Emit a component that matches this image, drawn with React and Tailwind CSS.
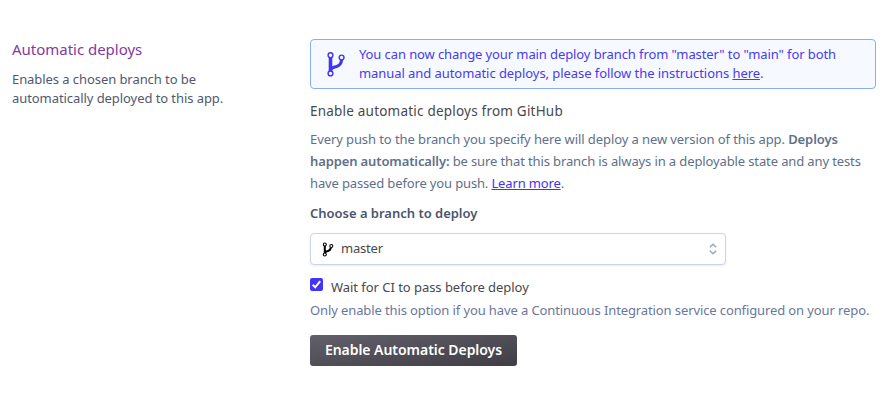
function ForkIcon({ className, hole }) {
  return (
    <svg className={className} viewBox="0 0 20 26" fill="none" aria-hidden="true">
      <path d="M4.500 6v14" stroke="currentColor" strokeWidth="3.600" />
      <path d="M4.500 19c1-2.400 3-2.700 5.500-3.300C13.500 14.900 15.200 13.400 15.500 9" stroke="currentColor" strokeWidth="3.100" />
      <circle cx="4.500" cy="4.200" r="2.400" fill={hole} stroke="currentColor" strokeWidth="1.400" />
      <circle cx="15.600" cy="6.500" r="2.400" fill={hole} stroke="currentColor" strokeWidth="1.400" />
      <circle cx="4.500" cy="22.400" r="2.400" fill={hole} stroke="currentColor" strokeWidth="1.400" />
    </svg>
  );
}

function SmallForkIcon() {
  return (
    <svg className="h-[15px] w-3" viewBox="0 0 12 15" fill="none" stroke="black" aria-hidden="true">
      <path d="M2.800 3.500v8M2.800 10.700c.7-1.400 2-1.300 3.300-1.700 1.500-.4 2.500-1.300 2.700-3.300" strokeWidth="2" />
      <g fill="white" strokeWidth="1.100">
        <circle cx="2.800" cy="2.500" r="1.500" />
        <circle cx="9.300" cy="4" r="1.500" />
        <circle cx="2.800" cy="12.500" r="1.500" />
      </g>
    </svg>
  );
}

function Notice() {
  return (
    <div className="flex h-[50px] w-[566px] items-center rounded-[4px] border border-[#84b0f0] bg-[#f6f9ff] pl-[15px] text-[#493bee]">
      <ForkIcon className="h-[26px] w-5 shrink-0 text-[#4435f2]" hole="#f6f9ff" />
      <p className="ml-[13px] text-[13px] leading-[19px] whitespace-nowrap">
        <span className="tracking-[-0.100px]">You can now change your main deploy branch from "master" to "main" for both</span>
        <br />
        <span className="tracking-[-0.065px]">
          manual and automatic deploys, please follow the instructions{" "}
          <a href="#" className="underline underline-offset-1">here</a>.
        </span>
      </p>
    </div>
  );
}

function BranchSelect() {
  return (
    <button type="button" className="mt-[10px] flex h-8 w-[416px] items-center rounded-[4px] border border-[#cfd3e8] bg-white pr-2 pl-[11px] text-left shadow-[0_1px_2px_rgba(60,60,120,0.1)]">
      <SmallForkIcon />
      <span className="ml-[7px] flex-1 pb-[2px] text-[13px] leading-5 tracking-[-0.200px] text-[#48484d]">master</span>
      <svg className="h-3 w-2" viewBox="0 0 8 12" fill="none" stroke="#98a7be" strokeWidth="1.500" aria-hidden="true">
        <path d="M.8 4.300 4 1.300l3.200 3M.8 7.700l3.200 3 3.200-3" />
      </svg>
    </button>
  );
}

export default function App() {
  return (
    <main className="flex h-[406px] w-[892px] bg-white pt-[39px] pl-3 font-['Noto_Sans',sans-serif]">
      <section className="w-[298px] shrink-0">
        <h2 className="text-[15px] leading-5 tracking-[-0.020px] text-[#8539a3]">Automatic deploys</h2>
        <p className="mt-[11px] text-[13px] leading-[19px] tracking-[-0.070px] whitespace-nowrap text-[#50596f]">
          Enables a chosen branch to be
          <br />
          automatically deployed to this app.
        </p>
      </section>
      <section className="w-[570px]">
        <Notice />
        <h3 className="mt-3 text-[13.500px] leading-5 tracking-[0.210px] text-[#48484d]">Enable automatic deploys from GitHub</h3>
        <p className="mt-[7px] text-[13px] leading-[22px] whitespace-nowrap text-[#60708a]">
          <span className="tracking-[-0.090px]">
            Every push to the branch you specify here will deploy a new version of this app. <strong className="font-semibold">Deploys</strong>
          </span>
          <br />
          <span className="tracking-[-0.120px]">
            <strong className="font-semibold">happen automatically:</strong> be sure that this branch is always in a deployable state and any tests
          </span>
          <br />
          <span className="tracking-[-0.145px]">
            have passed before you push. <a href="#" className="text-[#4332f5] underline underline-offset-1">Learn more</a>.
          </span>
        </p>
        <h4 className="mt-[9px] text-[13px] leading-5 font-semibold tracking-[-0.015px] text-[#4c556d]">Choose a branch to deploy</h4>
        <BranchSelect />
        <label className="mt-[12px] flex items-start text-[13px] leading-5 tracking-[-0.040px] text-[#48484d]">
          <svg className="mt-px mr-2 h-[13px] w-[13px]" viewBox="0 0 13 13" aria-hidden="true">
            <rect width="13" height="13" rx="2" fill="#4433ff" />
            <path d="m2.700 6.800 2.500 2.500 5-6.100" fill="none" stroke="white" strokeWidth="2" />
          </svg>
          <span>Wait for CI to pass before deploy</span>
        </label>
        <p className="mt-[3px] text-[13px] leading-5 tracking-[-0.110px] whitespace-nowrap text-[#6a779c]">
          Only enable this option if you have a Continuous Integration service configured on your repo.
        </p>
        <button type="button" className="mt-[15px] flex h-[31px] w-[207px] items-center justify-center rounded-[3px] bg-linear-to-br from-[#62606a] to-[#403d46] pb-[2px] text-[14px] font-semibold tracking-[-0.040px] text-white">
          Enable Automatic Deploys
        </button>
      </section>
    </main>
  );
}
